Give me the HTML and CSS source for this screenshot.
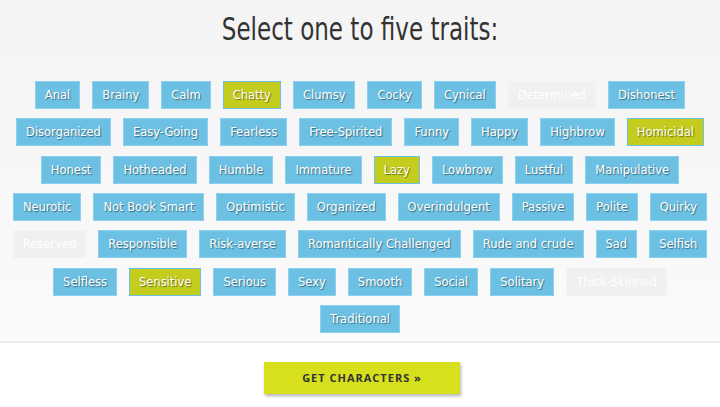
FILE: index.html
```html
<!DOCTYPE html>
<html>
<head>
<meta charset="utf-8">
<link rel="stylesheet" href="styles.css">
</head>
<body>
<div class="top">
  <h1 class="title"><span class="title-text">Select one to five traits:</span></h1>
  <div class="rows">
    <div class="row">
      <span class="tag">Anal</span><span class="tag">Brainy</span><span class="tag">Calm</span><span class="tag on">Chatty</span><span class="tag">Clumsy</span><span class="tag">Cocky</span><span class="tag">Cynical</span><span class="tag off">Determined</span><span class="tag">Dishonest</span>
    </div>
    <div class="row">
      <span class="tag">Disorganized</span><span class="tag">Easy-Going</span><span class="tag">Fearless</span><span class="tag">Free-Spirited</span><span class="tag">Funny</span><span class="tag">Happy</span><span class="tag">Highbrow</span><span class="tag on">Homicidal</span>
    </div>
    <div class="row">
      <span class="tag">Honest</span><span class="tag">Hotheaded</span><span class="tag">Humble</span><span class="tag">Immature</span><span class="tag on">Lazy</span><span class="tag">Lowbrow</span><span class="tag">Lustful</span><span class="tag">Manipulative</span>
    </div>
    <div class="row">
      <span class="tag">Neurotic</span><span class="tag">Not Book Smart</span><span class="tag">Optimistic</span><span class="tag">Organized</span><span class="tag">Overindulgent</span><span class="tag">Passive</span><span class="tag">Polite</span><span class="tag">Quirky</span>
    </div>
    <div class="row">
      <span class="tag off">Reserved</span><span class="tag">Responsible</span><span class="tag">Risk-averse</span><span class="tag">Romantically Challenged</span><span class="tag">Rude and crude</span><span class="tag">Sad</span><span class="tag">Selfish</span>
    </div>
    <div class="row">
      <span class="tag">Selfless</span><span class="tag on">Sensitive</span><span class="tag">Serious</span><span class="tag">Sexy</span><span class="tag">Smooth</span><span class="tag">Social</span><span class="tag">Solitary</span><span class="tag off">Thick-Skinned</span>
    </div>
    <div class="row">
      <span class="tag">Traditional</span>
    </div>
  </div>
</div>
<div class="bottom">
  <button class="go">GET CHARACTERS &raquo;</button>
</div>
</body>
</html>
```
FILE: styles.css
```css
html, body {
  margin: 0;
  padding: 0;
  background: #ffffff;
}
body {
  font-family: "DejaVu Sans", Verdana, sans-serif;
  width: 720px;
  height: 407px;
  overflow: hidden;
}
.top {
  background: linear-gradient(#f4f4f4, #fafafa);
  border-bottom: 2px solid #ececec;
  padding: 10px 0 8px;
}
.title {
  margin: 0 0 33px;
  text-align: center;
  font-family: "DejaVu Sans", sans-serif;
  font-weight: normal;
  font-size: 32px;
  line-height: 38px;
  color: #333333;
}
.title-text {
  display: inline-block;
  transform: scaleX(0.72);
}
.rows {
  display: flex;
  flex-direction: column;
  gap: 9.33px;
}
.row {
  display: flex;
  justify-content: center;
  gap: 12px;
}
.tag {
  box-sizing: border-box;
  height: 28px;
  line-height: 26px;
  padding: 0 9px;
  border: 1px solid #8dd0ee;
  background: #6bc0e3;
  color: #ffffff;
  font-size: 11.5px;
  text-shadow: 1px 1px 1px rgba(0, 0, 0, 0.45);
  white-space: nowrap;
}
.tag.on {
  background: #c4cc1e;
  border-color: #6bc0e3;
}
.tag.off {
  background: #f0f0f0;
  border-color: #f3f3f3;
  text-shadow: none;
}
.bottom {
  display: flex;
  justify-content: center;
  padding-top: 19px;
}
.go {
  width: 196px;
  height: 32px;
  margin-left: 4px;
  border: none;
  background: #d7e01c;
  color: #333333;
  font-family: "Open Sans", sans-serif;
  font-weight: bold;
  font-size: 11px;
  letter-spacing: 1px;
  box-shadow: 1px 2px 3px rgba(0, 0, 0, 0.3);
}
```
